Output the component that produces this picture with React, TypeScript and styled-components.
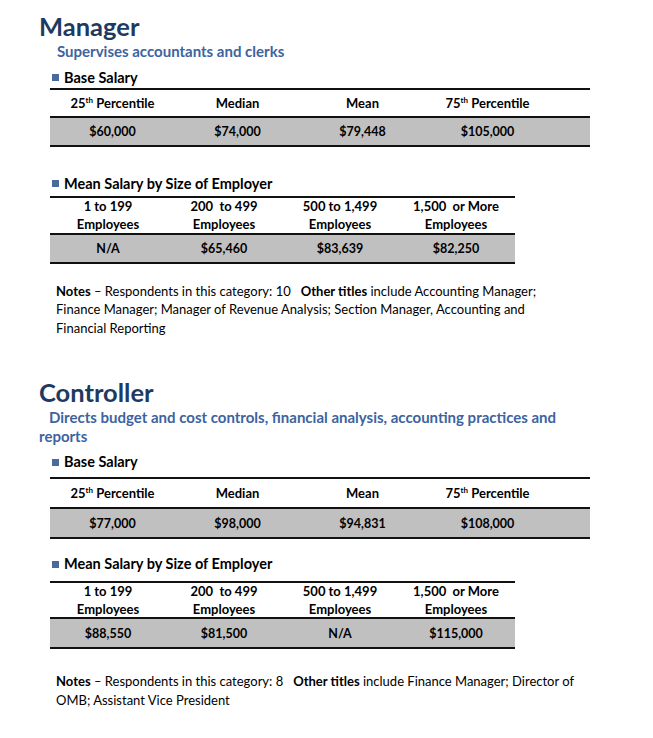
import React from "react";
import styled, { createGlobalStyle } from "styled-components";

const GlobalStyle = createGlobalStyle`
  html, body {
    margin: 0;
    padding: 0;
    background: #ffffff;
  }
  body {
    font-family: "Lato", "Open Sans", sans-serif;
    color: #000000;
  }
`;

const Page = styled.div`
  width: 653px;
  padding-top: 10px;
  display: flex;
  flex-direction: column;
`;

const JobBlock = styled.section<{ $gap: number }>`
  display: flex;
  flex-direction: column;
  margin-bottom: ${(p) => p.$gap}px;
`;

const Title = styled.h1`
  margin: 0 0 0 39px;
  font-size: 25.5px;
  line-height: 32px;
  font-weight: 700;
  color: #1f3a60;
`;

const Subtitle = styled.p<{ $indent: number; $hang: number }>`
  margin: 0 93px 0 ${(p) => p.$indent}px;
  text-indent: ${(p) => p.$hang}px;
  font-size: 15px;
  line-height: 18.5px;
  font-weight: 700;
  color: #3d63a0;
`;

const SectionHeading = styled.h2<{ $top: number }>`
  display: flex;
  align-items: center;
  gap: 5px;
  margin: ${(p) => p.$top}px 0 0 52px;
  font-size: 14.5px;
  line-height: 18px;
  font-weight: 700;
  color: #000;
`;

const Bullet = styled.span`
  width: 7px;
  height: 7px;
  background: #4a6a9c;
  flex: none;
`;

const Table = styled.div<{ $cols: string; $width: number; $top: number }>`
  display: grid;
  grid-template-columns: ${(p) => p.$cols};
  width: ${(p) => p.$width}px;
  margin: ${(p) => p.$top}px 0 0 50px;
  border-top: 2px solid #111;
`;

const HeadCell = styled.div<{ $h: number }>`
  height: ${(p) => p.$h}px;
  display: flex;
  align-items: center;
  justify-content: center;
  text-align: center;
  font-size: 13px;
  line-height: 18px;
  font-weight: 700;
  border-bottom: 2px solid #111;
`;

const DataCell = styled.div<{ $h: number }>`
  height: ${(p) => p.$h}px;
  display: flex;
  align-items: center;
  justify-content: center;
  background: #c0c0c0;
  font-size: 12.5px;
  font-weight: 700;
  border-bottom: 2px solid #111;
`;

const Sup = styled.sup`
  font-size: 8px;
  line-height: 0;
  vertical-align: 5px;
`;

const Notes = styled.p<{ $top: number }>`
  margin: ${(p) => p.$top}px 76px 0 56px;
  font-size: 13px;
  line-height: 18.5px;
  color: #000;
`;

const Strong = styled.strong`
  font-weight: 700;
`;

type Pct = { n: string; suffix?: string; label: string };

const baseHeads: Pct[] = [
  { n: "25", suffix: "th", label: " Percentile" },
  { n: "Median", label: "" },
  { n: "Mean", label: "" },
  { n: "75", suffix: "th", label: " Percentile" },
];

const sizeHeads = [
  ["1 to 199", "Employees"],
  ["200  to 499", "Employees"],
  ["500 to 1,499", "Employees"],
  ["1,500  or More", "Employees"],
];

type Spacing = {
  baseTop: number;
  baseHead: number;
  baseRow: number;
  meanGap: number;
  meanTop: number;
  meanHead: number;
  meanRow: number;
  notesTop: number;
};

type Job = {
  title: string;
  subtitle: string;
  subIndent: number;
  subHang: number;
  base: string[];
  bySize: string[];
  respondents: string;
  others: string;
  gap: number;
  s: Spacing;
};

const jobs: Job[] = [
  {
    title: "Manager",
    subtitle: "Supervises accountants and clerks",
    subIndent: 57,
    subHang: 0,
    base: ["$60,000", "$74,000", "$79,448", "$105,000"],
    bySize: ["N/A", "$65,460", "$83,639", "$82,250"],
    respondents: "10",
    others:
      "include Accounting Manager; Finance Manager; Manager of Revenue Analysis; Section Manager, Accounting and Financial Reporting",
    gap: 39,
    s: {
      baseTop: 1,
      baseHead: 26,
      baseRow: 27,
      meanGap: 28,
      meanTop: 3,
      meanHead: 35,
      meanRow: 27,
      notesTop: 18,
    },
  },
  {
    title: "Controller",
    subtitle:
      "Directs budget and cost controls, financial analysis, accounting practices and reports",
    subIndent: 39,
    subHang: 10,
    base: ["$77,000", "$98,000", "$94,831", "$108,000"],
    bySize: ["$88,550", "$81,500", "N/A", "$115,000"],
    respondents: "8",
    others: "include Finance Manager; Director of OMB; Assistant Vice President",
    gap: 0,
    s: {
      baseTop: 6,
      baseHead: 28,
      baseRow: 28,
      meanGap: 16,
      meanTop: 8,
      meanHead: 34,
      meanRow: 28,
      notesTop: 23,
    },
  },
];

function JobSection({ job }: { job: Job }) {
  const s = job.s;
  return (
    <JobBlock $gap={job.gap}>
      <Title>{job.title}</Title>
      <Subtitle $indent={job.subIndent} $hang={job.subHang}>
        {job.subtitle}
      </Subtitle>
      <SectionHeading $top={8}>
        <Bullet />
        Base Salary
      </SectionHeading>
      <Table $cols="repeat(4, 125px) 1fr" $width={540} $top={s.baseTop}>
        {baseHeads.map((h, i) => (
          <HeadCell key={i} $h={s.baseHead}>
            <span>
              {h.n}
              {h.suffix && <Sup>{h.suffix}</Sup>}
              {h.label}
            </span>
          </HeadCell>
        ))}
        <HeadCell $h={s.baseHead} />
        {job.base.map((v, i) => (
          <DataCell key={i} $h={s.baseRow}>
            {v}
          </DataCell>
        ))}
        <DataCell $h={s.baseRow} />
      </Table>
      <SectionHeading $top={s.meanGap}>
        <Bullet />
        Mean Salary by Size of Employer
      </SectionHeading>
      <Table $cols="repeat(4, 116px) 1fr" $width={465} $top={s.meanTop}>
        {sizeHeads.map((h, i) => (
          <HeadCell key={i} $h={s.meanHead}>
            <span style={{ whiteSpace: "pre" }}>
              {h[0]}
              <br />
              {h[1]}
            </span>
          </HeadCell>
        ))}
        <HeadCell $h={s.meanHead} />
        {job.bySize.map((v, i) => (
          <DataCell key={i} $h={s.meanRow}>
            {v}
          </DataCell>
        ))}
        <DataCell $h={s.meanRow} />
      </Table>
      <Notes $top={s.notesTop}>
        <Strong>Notes</Strong> – Respondents in this category: {job.respondents}
        {"\u00a0\u00a0 "}
        <Strong>Other titles</Strong> {job.others}
      </Notes>
    </JobBlock>
  );
}

export default function App() {
  return (
    <>
      <GlobalStyle />
      <Page>
        {jobs.map((j) => (
          <JobSection key={j.title} job={j} />
        ))}
      </Page>
    </>
  );
}
